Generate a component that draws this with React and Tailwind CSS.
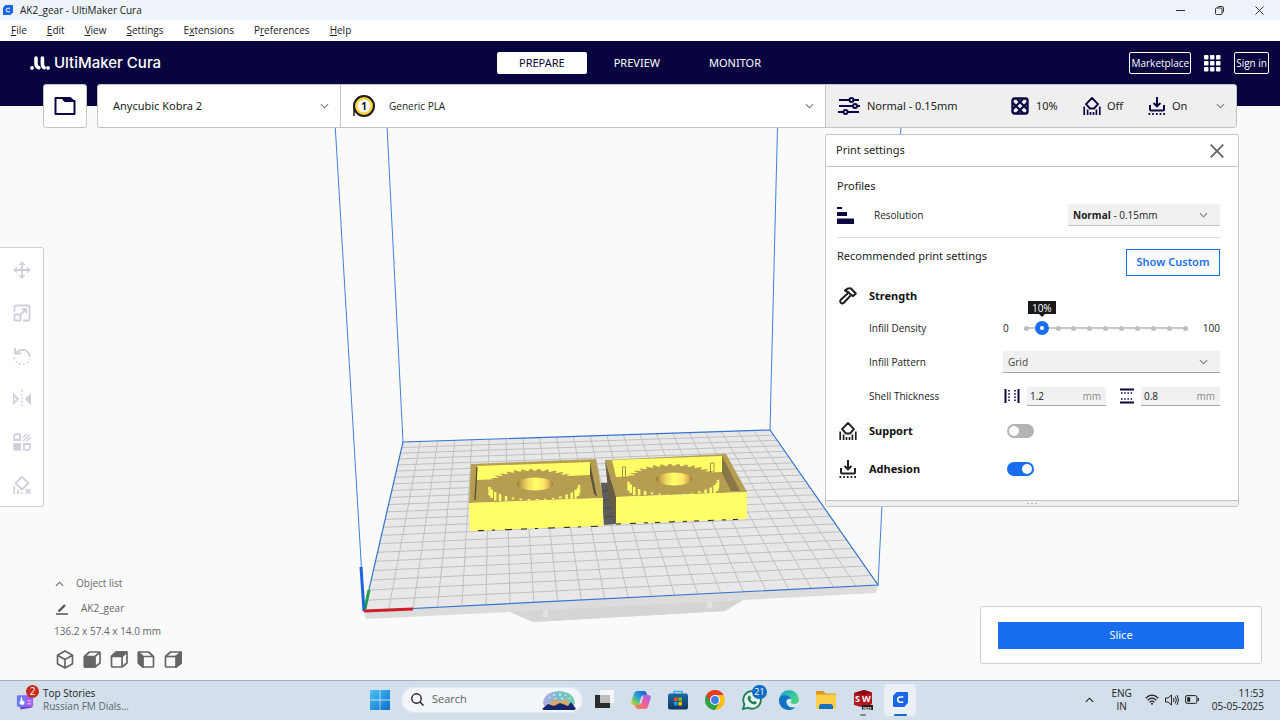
import * as React from 'react';

const NAVY = '#0b0742';

/* ---------- icons ---------- */

function Chevron({ className = '', up = false }) {
    return (
        <svg viewBox="0 0 10 6" className={`w-[9px] h-[6px] shrink-0 ${className}`} fill="none" stroke="currentColor" strokeWidth="1.2">
            <path d={up ? 'M1 5l4-4 4 4' : 'M1 1l4 4 4-4'} />
        </svg>
    );
}

function CuraMark({ className }) {
    return (
        <svg viewBox="0 0 16 16" className={className}>
            <path d="M4 0h11q1 0 1 1v10.500L12 16H1q-1 0-1-1V4z" fill="#1b66e8" />
            <path d="M11 5.200H7.800a2.800 2.800 0 0 0 0 5.600H11" fill="none" stroke="#fff" strokeWidth="1.600" />
        </svg>
    );
}

function UltiMakerLogo() {
    return (
        <svg viewBox="0 0 20 14" className="w-5 h-[14px]" fill="none" stroke="#fff" strokeWidth="3.600" strokeLinecap="round">
            <path d="M2 11.900h.01M18 11.900h.01" strokeWidth="3.800" />
            <path d="M6 2v5.500q0 3.400 2.800 4.200M12.400 2v5.500q0 3.200 1.800 4.200" />
        </svg>
    );
}

function FolderIcon() {
    return (
        <svg viewBox="0 0 22 20" className="w-[22px] h-5" fill="none" stroke={NAVY} strokeWidth="2" strokeLinejoin="round">
            <path d="M1.500 2h7l2.500 3h9.500v13h-19z" />
            <path d="M8 1h8.500L21 5H11z" fill={NAVY} stroke="none" />
        </svg>
    );
}

function SpoolIcon() {
    return (
        <svg viewBox="0 0 24 24" className="w-6 h-6">
            <path d="M2 12v10" stroke="#1c1c1c" strokeWidth="1.500" />
            <circle cx="12" cy="12" r="10" fill="#f9cf3c" stroke="#1c1c1c" strokeWidth="2" />
            <circle cx="12" cy="12" r="6.500" fill="#fff" />
            <text x="12" y="15.500" textAnchor="middle" fontSize="10" fontWeight="700" fill="#111">1</text>
        </svg>
    );
}

function SlidersIcon() {
    return (
        <svg viewBox="0 0 22 18" className="w-[22px] h-[18px]" fill="none" stroke={NAVY} strokeWidth="2">
            <path d="M1 3h10M16 3h5M1 9h13M20 9h2M0 15h5M10 15h11" />
            <circle cx="13.500" cy="3" r="2" />
            <circle cx="17" cy="9" r="2" />
            <circle cx="7.500" cy="15" r="2" />
        </svg>
    );
}

function InfillIcon() {
    return (
        <svg viewBox="0 0 18 18" className="w-[18px] h-[18px]">
            <rect x="1.500" y="1.500" width="15" height="15" rx="2" fill="#efefef" stroke={NAVY} strokeWidth="2.400" />
            <path d="M2 12L12 2M6 16L16 6M2 6l10 10M6 2l10 10" stroke={NAVY} strokeWidth="2.200" />
        </svg>
    );
}

function SupportIcon() {
    return (
        <svg viewBox="0 0 18 18" className="w-[18px] h-[18px]" fill="none" stroke="currentColor" strokeWidth="1.900">
            <path d="M9 1l6 6.200-4 4.300H7L3 7.200z" strokeLinejoin="round" />
            <path d="M1.200 9.500V18M4.600 12.500V18M7.500 15V18M10.500 15V18M13.400 12.500V18M16.800 9.500V18" strokeWidth="1.700" />
        </svg>
    );
}

function AdhesionIcon() {
    return (
        <svg viewBox="0 0 18 18" className="w-[18px] h-[18px]" fill="none" stroke="currentColor" strokeWidth="2">
            <path d="M9 0v9M5.500 6L9 9.300 12.500 6" />
            <path d="M2 8v4.500q0 1 1 1h12q1 0 1-1V8" />
            <path d="M0.500 17h17" strokeDasharray="1.700 2" strokeWidth="1.900" />
        </svg>
    );
}

function HammerIcon() {
    return (
        <svg viewBox="0 0 18 18" className="w-[18px] h-[18px]" fill="none" stroke="#222" strokeWidth="2" strokeLinejoin="round">
            <path d="M6 3.500Q9 .8 12 1.500l4.800 5-2.600 2.500-2-1-2.500-2.500z" />
            <path d="M9.200 6L1.800 12.800a2 2 0 0 0 3 3L11.600 8.500" />
        </svg>
    );
}

function WallIcon() {
    return (
        <svg viewBox="0 0 16 14" className="w-4 h-[14px]" stroke={NAVY} fill="none">
            <path d="M1.500 0v14M14.500 0v14" strokeWidth="2" />
            <path d="M5 1v12M11 1v12" strokeWidth="1.600" strokeDasharray="1.500 1.700" />
        </svg>
    );
}

function TopBottomIcon() {
    return (
        <svg viewBox="0 0 14 16" className="w-[14px] h-4" stroke={NAVY} fill="none">
            <path d="M0 1.500h14M0 14.500h14" strokeWidth="2" />
            <path d="M1 5h12M1 11h12" strokeWidth="1.600" strokeDasharray="1.500 1.700" />
        </svg>
    );
}

const toolIcons = [
    ['Move', (
        <g key="m">
            <path d="M9 2v14M2 9h14" />
            <path d="M9 0l3.600 4H5.400zM9 18l3.600-4H5.400zM0 9l4-3.600v7.200zM18 9l-4-3.600v7.200z" fill="currentColor" stroke="none" />
        </g>
    )],
    ['Scale', (
        <g key="s">
            <path d="M1.500 8V2.500q0-1 1-1h13q1 0 1 1v13q0 1-1 1H10M1.500 10.500h6v6h-5q-1 0-1-1zM7.500 10.500L13 5M8.500 4.800h4.800v4.800" />
        </g>
    )],
    ['Rotate', (
        <g key="r">
            <path d="M2 1v5.500h6M2.500 6Q7 1.500 12 3.200 16.500 5 16.800 10" />
            <path d="M1 10.500Q3 17 9 17.200 14.500 17 16.500 12" strokeDasharray="1.600 2.400" />
        </g>
    )],
    ['Mirror', (
        <g key="i">
            <path d="M9 0v18" strokeDasharray="1.800 1.800" strokeWidth="1.600" />
            <path d="M.5 4.500L5 9 .5 13.500z" />
            <path d="M18 4v10l-5-5z" fill="currentColor" />
        </g>
    )],
    ['Per model settings', (
        <g key="p">
            <path d="M1.200 2.500q0-1.300 1.300-1.300H7V7H1.200zM11 11h5.800v4.500q0 1.300-1.300 1.300H11z" />
            <path d="M1.200 11H7v5.800H2.500q-1.300 0-1.300-1.300z" fill="currentColor" />
            <path d="M10 4.500L14 .8M10 8l7-6.500M13 8.500l4.500-4" strokeWidth="1.500" />
        </g>
    )],
    ['Support blocker', (
        <g key="b">
            <path d="M9 .8l6.500 6.400L9 13.500 2.500 7.200z" />
            <path d="M1.200 10v8M5 14v4M8.500 16v2" />
            <path d="M13 13l4.500 4.500M17.500 13L13 17.500" />
        </g>
    )],
];

const CUBE_LINES = 'M1.500 6.500V16q0 1 1 1H12l5-4V3q0-1-1-1H6.500z';

const cubeIcons = [
    ['3D view', <path key="a" d="M9 1l7.500 4.200v8.600L9 18l-7.500-4.200V5.200zM1.500 5.200L9 9.500l7.500-4.300M9 9.500V18" />],
    ['Front view', <g key="b"><path d={CUBE_LINES} /><path d="M1.500 6.500H12V17H1.500z" fill="currentColor" /><path d="M12 6.500l5-4.500" /></g>],
    ['Top view', <g key="c"><path d={CUBE_LINES} /><path d="M1.500 6.500L6.500 2H17l-5 4.500z" fill="currentColor" /><path d="M12 6.500V17" /></g>],
    ['Left view', <g key="d"><path d="M16.500 6.500V16q0 1-1 1H6L1.500 13V3q0-1 1-1h9zM6 6.500h10.500" /><path d="M1.500 2L6 6.500V17l-4.500-4z" fill="currentColor" /></g>],
    ['Right view', <g key="e"><path d={CUBE_LINES} /><path d="M12 6.500L17 2v11l-5 4z" fill="currentColor" /><path d="M1.500 6.500H12" /></g>],
];

/* ---------- 3D scene ---------- */

const PLATE = [[364, 611], [878, 585], [770, 430], [403, 442]];

// maps the unit square onto the build plate
function project(u, v) {
    const [[x0, y0], [x1, y1], [x2, y2], [x3, y3]] = PLATE;
    const dx1 = x1 - x2, dx2 = x3 - x2, sx = x0 - x1 + x2 - x3;
    const dy1 = y1 - y2, dy2 = y3 - y2, sy = y0 - y1 + y2 - y3;
    const det = dx1 * dy2 - dx2 * dy1;
    const g = (sx * dy2 - dx2 * sy) / det;
    const h = (dx1 * sy - sx * dy1) / det;
    const w = g * u + h * v + 1;
    const x = ((x1 - x0 + g * x1) * u + (x3 - x0 + h * x3) * v + x0) / w;
    const y = ((y1 - y0 + g * y1) * u + (y3 - y0 + h * y3) * v + y0) / w;
    return `${x.toFixed(2)} ${y.toFixed(2)}`;
}

const CELLS = 22;
let gridPath = '';
for (let i = 1; i < CELLS; i++) {
    const t = i / CELLS;
    gridPath += `M${project(t, 0)}L${project(t, 1)}M${project(0, t)}L${project(1, t)}`;
}

const TEETH = 34;

function gearPath(cx, cy, rx, ry) {
    let d = '';
    for (let i = 0; i < TEETH * 4; i++) {
        const a = (i / (TEETH * 4)) * Math.PI * 2;
        const k = i % 4 < 2 ? 1 : 0.88;
        d += `${i ? 'L' : 'M'}${(cx + Math.cos(a) * rx * k).toFixed(2)} ${(cy + Math.sin(a) * ry * k).toFixed(2)}`;
    }
    return d + 'z';
}

// lit vertical faces under the teeth at both sides, the front ones are hidden by the wall
function toothSides(cx, cy, rx, ry) {
    let d = '';
    for (let i = 0; i < TEETH / 2; i++) {
        const a = ((i + 0.12) / TEETH) * Math.PI * 2;
        const c = Math.cos(a);
        const len = Math.abs(c) > 0.62 ? 9 : 2;
        d += `M${(cx + c * (rx - 1)).toFixed(2)} ${(cy + Math.sin(a) * ry).toFixed(2)}v${len}`;
    }
    return d;
}

function Gear({ cx, cy }) {
    return (
        <g>
            <path d={toothSides(cx, cy, 46, 15)} stroke="#ffff66" strokeWidth="2.500" />
            <path d={gearPath(cx, cy, 46, 15)} fill="#b59d52" />
            <ellipse cx={cx + 1} cy={cy} rx="18" ry="6.500" fill="url(#bore)" />
        </g>
    );
}

function Scene() {
    return (
        <svg viewBox="0 106 1280 574" preserveAspectRatio="xMidYMid slice" className="absolute inset-0 w-full h-full" role="img" aria-label="Build plate with two gear boxes">
            <defs>
                <linearGradient id="bore">
                    <stop offset="0" stopColor="#8f7638" />
                    <stop offset=".12" stopColor="#c9a84c" />
                    <stop offset=".3" stopColor="#f2dc60" />
                    <stop offset=".5" stopColor="#ffff66" />
                    <stop offset=".75" stopColor="#ffe568" />
                    <stop offset=".9" stopColor="#d8b04e" />
                    <stop offset="1" stopColor="#8f7638" />
                </linearGradient>
                <clipPath id="leftBox"><path d="M477 464H591L598 498 475 502z" /></clipPath>
                <clipPath id="rightBox"><path d="M612 458H723L741 492 619 496z" /></clipPath>
            </defs>

            <path d="M364 611L878 585 876 593 743 600 725 611 533 622 510 612 366 619z" fill="#dcdcdc" />
            <path d="M510 612L743 600 725 611 533 622z" fill="#d5d5d5" />
            <path d="M543 610h5v7h-5zM707 602h5v6h-5z" fill="#e2e2e2" />

            <path d="M364 611L878 585 770 430 403 442z" fill="#e8e8e8" />
            <path d={gridPath} stroke="#c0c0c0" strokeWidth="1" fill="none" />
            <path d="M364 611L878 585 770 430 403 442z" fill="none" stroke="#3672cf" strokeWidth="1.200" />
            <path d="M364 611L334 106M403 442L386 106M770 430L778 106M878 585L902 106" fill="none" stroke="#3f7fdc" strokeWidth="1" />

            {/* left box */}
            <path d="M601 483h8l7 41-12 1z" fill="#5c5c5c" />
            <path d="M603 491l12-1M604 500l12-1M604 508l12-1M604 517l12-1" stroke="#4a4a4a" />
            <path d="M471 464L596 459 603 498 469 503z" fill="#b59d52" />
            <path d="M477 466L590 462V475L477 480z" fill="#ffff66" />
            <g clipPath="url(#leftBox)"><Gear cx={534} cy={484} /></g>
            <path d="M590 462L597 497 594 494 590 475z" fill="#5f563f" />
            <path d="M477 467L475 500" stroke="#4f4630" strokeWidth="1.200" />
            <path d="M469 503L603 498V526L470 531z" fill="#ffff66" />
            <path d="M470 531L603 526" stroke="#22221a" strokeWidth="1" strokeDasharray="6 8 3 10 7 9" strokeDashoffset="-8" />

            {/* right box */}
            <path d="M605 460L726 454 747 492 616 497z" fill="#b59d52" />
            <path d="M605 460L616 497V524L609 500z" fill="#665c42" />
            <path d="M612 460L722 456V472L616 477z" fill="#ffff66" />
            <g clipPath="url(#rightBox)"><Gear cx={673} cy={479} /></g>
            <path d="M722 456L740 491 731 491 722 473z" fill="#877747" />
            <path d="M622.500 478v-11h3v11M710.500 474v-11h3.500v11" fill="none" stroke="#a58e4c" strokeWidth="1" />
            <path d="M616 497L747 492V519L616 524z" fill="#ffff66" />
            <path d="M616 524L747 519" stroke="#22221a" strokeWidth="1" strokeDasharray="5 9 6 8 4 7" />

            <path d="M365 609L369 590" stroke="#1f9d49" strokeWidth="3" />
            <path d="M364 611L361 567" stroke="#1c66d8" strokeWidth="3" />
            <path d="M364 611L413 609" stroke="#cb2026" strokeWidth="3" />
        </svg>
    );
}

/* ---------- window chrome ---------- */

function TitleBar() {
    return (
        <div className="h-5 flex items-center bg-[#eef3f9] pl-[3px] text-[10px] text-[#1c1c1c]">
            <CuraMark className="w-[10px] h-[10px] mr-[7px]" />
            <span className="flex-1">AK2_gear - UltiMaker Cura</span>
            <button aria-label="Minimize" className="w-[39px] h-5 flex items-center justify-center">
                <svg viewBox="0 0 9 9" className="w-[9px] h-[9px]" stroke="#333"><path d="M0 4.500h9" /></svg>
            </button>
            <button aria-label="Restore" className="w-[39px] h-5 flex items-center justify-center">
                <svg viewBox="0 0 9 9" className="w-[9px] h-[9px]" fill="none" stroke="#333">
                    <rect x=".5" y="2" width="6.500" height="6.500" rx="1" />
                    <path d="M2.500 2V1.500q0-1 1-1H7q1.500 0 1.500 1.500v3.500q0 1-1 1" />
                </svg>
            </button>
            <button aria-label="Close" className="w-[41px] h-5 flex items-center justify-center">
                <svg viewBox="0 0 9 9" className="w-[9px] h-[9px]" stroke="#333"><path d="M.5.5l8 8M8.500.5l-8 8" /></svg>
            </button>
        </div>
    );
}

const menus = [
    ['', 'F', 'ile'],
    ['', 'E', 'dit'],
    ['', 'V', 'iew'],
    ['', 'S', 'ettings'],
    ['E', 'x', 'tensions'],
    ['P', 'r', 'eferences'],
    ['', 'H', 'elp'],
];

function MenuBar() {
    return (
        <nav className="h-[21px] flex items-center gap-5 bg-white pl-[11px] text-[10px] text-[#222]">
            {menus.map(([before, key, after]) => (
                <button key={after}>{before}<u>{key}</u>{after}</button>
            ))}
        </nav>
    );
}

function Header() {
    return (
        <header className="h-[65px] bg-[#08043f] pt-[11px] px-[11px] grid grid-cols-[1fr_auto_1fr] items-start text-white">
            <div className="h-[22px] ml-[19px] flex items-center gap-1">
                <UltiMakerLogo />
                <span className="font-['Inter'] text-[15px] font-medium leading-[22px]">UltiMaker Cura</span>
            </div>
            <div className="flex gap-[5px] font-['Noto_Sans'] text-[11px]">
                <button className="h-[22px] px-[22px] rounded-[2px] bg-white text-[#08043f]">PREPARE</button>
                <button className="h-[22px] px-[22px]">PREVIEW</button>
                <button className="h-[22px] px-[22px]">MONITOR</button>
            </div>
            <div className="flex justify-end items-center gap-[13px] text-[10px]">
                <button className="h-[22px] px-[1px] border border-white rounded-[2px]">Marketplace</button>
                <button aria-label="Apps">
                    <svg viewBox="0 0 17 17" className="w-[17px] h-[17px]" fill="#fff">
                        {[0, 6, 12].map((y) => [0, 6, 12].map((x) => (
                            <rect key={`${x}-${y}`} x={x} y={y} width="4.500" height="4.500" rx="1" />
                        )))}
                    </svg>
                </button>
                <button className="h-[22px] px-[1px] border border-white rounded-[2px]">Sign in</button>
            </div>
        </header>
    );
}

function StageBar() {
    return (
        <div className="relative -mt-[22px] flex gap-[10px] pl-[43px] pr-[43px]">
            <button aria-label="Open file" className="w-11 h-11 rounded-[3px] bg-white border border-[#c4c4c8] flex items-center justify-center">
                <FolderIcon />
            </button>
            <div className="flex-1 h-11 flex bg-white border border-[#c4c4c8] rounded-[3px] overflow-hidden">
                <button className="w-[243px] flex items-center justify-between pl-[15px] pr-[11px] border-r border-[#c4c4c8] font-['Noto_Sans'] text-[11px] text-[#222]">
                    Anycubic Kobra 2
                    <Chevron className="text-[#777]" />
                </button>
                <button className="flex-1 flex items-center pl-[11px] pr-[11px] text-[10px] text-[#222]">
                    <SpoolIcon />
                    <span className="flex-1 text-left pl-[13px]">Generic PLA</span>
                    <Chevron className="text-[#777]" />
                </button>
                <button className="w-[411px] flex items-center pl-3 pr-[11px] bg-[#efefef] border-l border-[#c4c4c8] font-['Noto_Sans'] text-[11px] text-[#222]">
                    <SlidersIcon />
                    <span className="flex-1 text-left pl-[7px]">Normal - 0.15mm</span>
                    <span className="w-[72px] flex items-center gap-[7px]"><InfillIcon />10%</span>
                    <span className="w-[65px] flex items-center gap-[6px] text-[#0b0742]"><SupportIcon /><span className="text-[#222]">Off</span></span>
                    <span className="w-[68px] flex items-center gap-[6px] text-[#0b0742]"><AdhesionIcon /><span className="text-[#222]">On</span></span>
                    <Chevron className="text-[#777]" />
                </button>
            </div>
        </div>
    );
}

function ToolPanel() {
    return (
        <div className="w-11 mt-[119px] bg-white border border-l-0 border-[#cfcfd4] rounded-r-[3px] flex flex-col">
            {toolIcons.map(([name, icon]) => (
                <button key={name} aria-label={name} className="h-[43px] flex items-center justify-center text-[#d0cfdb]">
                    <svg viewBox="0 0 18 18" className="w-[18px] h-[18px]" fill="none" stroke="currentColor" strokeWidth="1.800">{icon}</svg>
                </button>
            ))}
        </div>
    );
}

/* ---------- print settings ---------- */

function InfillSlider() {
    return (
        <div className="flex-1 flex items-center justify-between">
            <span className="text-[10px]">0</span>
            <div className="relative w-[174px] h-4 grid items-center">
                <div className="[grid-area:1/1] mx-[7px] h-[2px] bg-[#c8c8c8]" />
                <div className="[grid-area:1/1] mx-[5px] flex justify-between">
                    {Array.from({ length: 11 }, (_, i) => (
                        <span key={i} className="w-[5px] h-[5px] rounded-full bg-[#bebebe]" />
                    ))}
                </div>
                <input
                    type="range"
                    id="density"
                    min="0"
                    max="100"
                    defaultValue="10"
                    className="[grid-area:1/1] relative w-full h-4 m-0 appearance-none bg-transparent [&::-webkit-slider-thumb]:appearance-none [&::-webkit-slider-thumb]:w-[14px] [&::-webkit-slider-thumb]:h-[14px] [&::-webkit-slider-thumb]:rounded-full [&::-webkit-slider-thumb]:bg-white [&::-webkit-slider-thumb]:border-[5px] [&::-webkit-slider-thumb]:border-[#196ef0]"
                />
                <output htmlFor="density" className="absolute left-[9px] -top-[19px] w-7 h-[13px] bg-[#1a1a1a] text-white text-[10px] leading-[14px] text-center after:absolute after:left-[11px] after:top-[13px] after:border-x-[3px] after:border-t-[3px] after:border-x-transparent after:border-t-[#1a1a1a]">10%</output>
            </div>
            <span className="text-[10px]">100</span>
        </div>
    );
}

function ThicknessField({ id, label, value }) {
    return (
        <label className="w-[79px] h-[19px] flex items-center bg-[#f1f1f1] border-b border-[#a8a8a8] pt-[1px] pl-[3px] pr-[5px] text-[10px] text-[#8a8a8a]">
            <input id={id} aria-label={label} defaultValue={value} className="flex-1 min-w-0 bg-transparent text-[#222] outline-none" />
            mm
        </label>
    );
}

function Toggle({ id, checked }) {
    return (
        <input
            type="checkbox"
            role="switch"
            id={id}
            defaultChecked={checked}
            className="appearance-none ml-1 w-[27px] h-[14px] rounded-full bg-[#b4b4b4] checked:bg-[#196ef0] flex items-center px-[2px] checked:justify-end before:w-[10px] before:h-[10px] before:rounded-full before:bg-white"
        />
    );
}

function SettingRow({ className, icon, label, htmlFor, bold, children }) {
    return (
        <div className={`flex items-center ${className}`}>
            <span className="w-8 pl-[2px] text-[#222]">{icon}</span>
            <label htmlFor={htmlFor} className={bold ? "w-[134px] font-['Noto_Sans'] text-[11px] font-bold text-[#111]" : 'w-[134px] text-[10px]'}>{label}</label>
            {children}
        </div>
    );
}

function PrintSettings() {
    return (
        <section className="w-[414px] mt-[6px] mr-[41px] bg-white border border-[#c4c4c8] rounded-[3px] text-[#222] overflow-hidden">
            <div className="h-8 flex items-center justify-between pl-[10px] pr-[14px] border-b border-[#c4c4c8]">
                <h2 className="font-['Noto_Sans'] text-[11px]">Print settings</h2>
                <button aria-label="Close print settings">
                    <svg viewBox="0 0 14 14" className="w-[14px] h-[14px]" stroke="#666" strokeWidth="1.900"><path d="M.7.7l12.600 12.600M13.300.7L.7 13.300" /></svg>
                </button>
            </div>

            <div className="pt-[7px] pb-4 pl-[11px] pr-[18px]">
                <h3 className="h-6 flex items-center font-['Noto_Sans'] text-[11px]">Profiles</h3>
                <div className="h-[34px] flex items-center">
                    <svg viewBox="0 0 17 17" className="w-[17px] h-[17px] mr-5" fill={NAVY}><path d="M0 0h5v2H0zM0 5h10v4H0zM0 11.500h17V17H0z" /></svg>
                    <label htmlFor="resolution" className="flex-1 text-[10px]">Resolution</label>
                    <div className="relative w-[152px] h-[22px] flex items-center justify-between bg-[#f1f1f1] border-b border-[#c4c4c4] pl-[5px] pr-3 text-[10px]">
                        <span className="pt-[1px]"><b>Normal</b> - 0.15mm</span>
                        <Chevron className="text-[#777]" />
                        <select id="resolution" className="absolute inset-0 w-full opacity-0">
                            <option>Normal - 0.15mm</option>
                        </select>
                    </div>
                </div>
                <hr className="mt-[5px] border-[#dcdcdc]" />

                <div className="h-[38px] pt-[11px] flex items-start justify-between">
                    <h3 className="font-['Noto_Sans'] text-[11px] leading-[13px]">Recommended print settings</h3>
                    <button className="w-[94px] h-[27px] border border-[#196ef0] font-['Noto_Sans'] text-[11px] font-semibold text-[#196ef0]">Show Custom</button>
                </div>

                <SettingRow className="h-10" icon={<HammerIcon />} label="Strength" bold />
                <SettingRow className="h-6" label="Infill Density" htmlFor="density">
                    <InfillSlider />
                </SettingRow>
                <SettingRow className="h-11" label="Infill Pattern" htmlFor="pattern">
                    <div className="flex-1 h-[22px] grid items-center bg-[#f1f1f1] border-b border-[#a8a8a8]">
                        <select id="pattern" className="[grid-area:1/1] w-full appearance-none bg-transparent pt-[1px] pl-[5px] text-[10px] text-[#444]">
                            <option>Grid</option>
                        </select>
                        <Chevron className="[grid-area:1/1] justify-self-end mr-3 text-[#777] pointer-events-none" />
                    </div>
                </SettingRow>
                <SettingRow className="h-6" label="Shell Thickness" htmlFor="wall">
                    <div className="flex-1 flex items-center justify-between pl-[1px]">
                        <div className="flex items-center gap-[7px]">
                            <WallIcon />
                            <ThicknessField id="wall" label="Wall thickness" value="1.2" />
                        </div>
                        <div className="flex items-center gap-[7px]">
                            <TopBottomIcon />
                            <ThicknessField id="topbottom" label="Top/bottom thickness" value="0.8" />
                        </div>
                    </div>
                </SettingRow>
                <SettingRow className="h-[46px]" icon={<SupportIcon />} label="Support" htmlFor="support" bold>
                    <Toggle id="support" />
                </SettingRow>
                <SettingRow className="h-[30px]" icon={<AdhesionIcon />} label="Adhesion" htmlFor="adhesion" bold>
                    <Toggle id="adhesion" checked />
                </SettingRow>
            </div>

            <div className="h-[6px] flex items-center justify-center gap-[2px] bg-[#efefef] border-t border-[#c4c4c8]">
                <span className="w-[2px] h-[1px] bg-[#bbb]" />
                <span className="w-[2px] h-[1px] bg-[#bbb]" />
                <span className="w-[2px] h-[1px] bg-[#bbb]" />
            </div>
        </section>
    );
}

/* ---------- bottom of the stage ---------- */

function ObjectList() {
    return (
        <div className="pl-[54px] pb-[2px] text-[10px] text-[#666]">
            <button className="h-[25px] flex items-center">
                <Chevron up className="ml-[1px] mr-3" />
                Object list
            </button>
            <div className="h-[25px] flex items-center">
                <svg viewBox="0 0 12 12" className="w-3 h-3 ml-[2px] mr-[13px]" stroke="#555" fill="none">
                    <path d="M2.500 8.500L9 2" strokeWidth="2.400" />
                    <path d="M0 11h12" strokeWidth="1.500" />
                </svg>
                AK2_gear
            </div>
            <div className="h-5 flex items-center">136.2 x 57.4 x 14.0 mm</div>
            <div className="h-[37px] pl-[2px] flex items-center gap-[9px]">
                {cubeIcons.map(([name, icon]) => (
                    <button key={name} aria-label={name}>
                        <svg viewBox="0 0 18 19" className="w-[18px] h-[19px]" fill="none" stroke="currentColor" strokeWidth="1.700" strokeLinejoin="round">{icon}</svg>
                    </button>
                ))}
            </div>
        </div>
    );
}

function SliceCard() {
    return (
        <div className="w-[282px] mr-[18px] mb-4 px-[17px] pt-[15px] pb-[14px] bg-white border border-[#cfcfd4] rounded-[3px]">
            <button className="block w-full h-[27px] bg-[#196ef0] text-white font-['Noto_Sans'] text-[11px]">Slice</button>
        </div>
    );
}

/* ---------- taskbar ---------- */

const taskApps = [
    ['Task view', (
        <g key="t">
            <rect x="6" y="0" width="14" height="13" rx="1" fill="#f7f7f7" />
            <path d="M1 5h5v8h10v5H1z" fill="#2b2b2b" />
            <rect x="6" y="5" width="10" height="8" fill="#bdbdbd" />
        </g>
    )],
    ['Copilot', (
        <g key="c">
            <path d="M6 1h7q2 0 2.600 2l.6 2h-3q-2 0-2.700 2l-2 7Q8 16 6 15H3Q-.5 15 .5 11L3 3.500Q3.800 1 6 1z" fill="url(#copA)" />
            <path d="M14 19H7q-2 0-2.600-2l-.6-2h3q2 0 2.700-2l2-7Q12 4.500 14 5h3q3.500 0 2.500 4L17 16.500Q16.200 19 14 19z" fill="url(#copB)" />
            <path d="M10.300 6.500h2l-1.800 7h-2z" fill="#d3dfeb" />
        </g>
    )],
    ['Microsoft Store', (
        <g key="s">
            <path d="M6 4V1.500h8V4" fill="none" stroke="#35b4e8" strokeWidth="1.500" />
            <rect x="0" y="3.500" width="20" height="16" rx="2" fill="url(#store)" />
            <path d="M6 7.500h3.600v3.600H6z" fill="#f25022" />
            <path d="M10.400 7.500H14v3.600h-3.600z" fill="#7fba00" />
            <path d="M6 11.900h3.600v3.600H6z" fill="#00a4ef" />
            <path d="M10.400 11.900H14v3.600h-3.600z" fill="#ffb900" />
        </g>
    )],
    ['Chrome', (
        <g key="h">
            <circle cx="10" cy="10" r="10" fill="#fbc116" />
            <path d="M10 10L1.340 5A10 10 0 0 0 10 20l4.300-7.500z" fill="#2ba24c" />
            <path d="M10 5h8.660A10 10 0 0 0 1.340 5L5.700 12.500z" fill="#e33b2e" />
            <circle cx="10" cy="10" r="5" fill="#fff" />
            <circle cx="10" cy="10" r="3.900" fill="#3d7df0" />
        </g>
    )],
    ['WhatsApp', (
        <g key="w">
            <path d="M1 19l1.400-4.800A8.800 8.800 0 1 1 6 17.700z" fill="#e9f2ee" stroke="#1f8055" strokeWidth="1.900" />
            <path d="M6.500 6q1-1 1.800.2l.8 1.800-.9 1.200q1 1.900 3 2.700l1.200-1 2 1q.8.700-.2 1.800-1.600 1.500-4.500 0-3-1.700-4-4.500Q5.300 7.300 6.500 6z" fill="#1f8055" />
        </g>
    )],
    ['Edge', (
        <g key="e">
            <circle cx="10" cy="10" r="10" fill="url(#edge)" />
            <path d="M.2 9Q1 5 6 5.200q6 .5 6.300 5.300Q12 8.500 9.500 9 6.500 10 8 14q2.500 5 9 2.500Q14 20.500 9 20-.8 18.500.2 9z" fill="#1472c4" />
            <path d="M12.300 9.500q.3 1.800-1 2.800.5 1.700 4 1.600 4-.3 4.700-3.500l.5 4-3 2.500q-7 2-9.500-3Q6.300 9.500 9.600 9q2-.5 2.700.5z" fill="#d8e8f4" />
        </g>
    )],
    ['File Explorer', (
        <g key="f">
            <path d="M0 2q0-1 1-1h6.500l2 2.500H19q1 0 1 1V9H0z" fill="#d99a1c" />
            <rect x="0" y="4.500" width="20" height="14.500" rx="1.300" fill="#fccf4a" />
            <path d="M3 19v-2.500q0-2.500 2.500-2.500h9q2.500 0 2.500 2.500V19z" fill="#1571bd" />
        </g>
    )],
    ['SolidWorks', (
        <g key="k">
            <path d="M1 3l10-3 8 2.500V14l-7 4-11-3z" fill="#b5151d" />
            <path d="M1 3l10-3 8 2.500L11 5z" fill="#8a0d14" />
            <text x="2" y="12" fontSize="9" fontWeight="700" fill="#fff">S</text>
            <text x="9" y="12" fontSize="9" fontWeight="700" fill="#fff">W</text>
            <rect x="9" y="15" width="11" height="5" fill="#1c1c1c" />
            <text x="9.500" y="19.500" fontSize="4" fontWeight="700" fill="#fff">2021</text>
        </g>
    )],
];

function Taskbar() {
    return (
        <footer className="h-10 pb-[2px] grid grid-cols-[1fr_auto_1fr] items-center bg-[#d3dfeb] border-t border-[#a6b1bb] text-[#1c1c1c]">
            <button className="pl-4 flex items-center text-left">
                <span className="relative mr-2">
                    <svg viewBox="0 0 20 20" className="w-[19px] h-5">
                        <path d="M2 10l15 2v6L5 20z" fill="#7a3fd0" />
                        <rect x="1" y="5" width="17" height="12" rx="1.500" fill="#a35df2" />
                        <path d="M1 6h9v11H2.500Q1 17 1 15.500z" fill="#6a7cf5" />
                        <path d="M5 7v4l-1.500 1Q4 15 6.500 15T9 12L6.500 10V7z" fill="#fff" />
                        <path d="M12 11h4M12 14h4" stroke="#e6d3ff" />
                    </svg>
                    <span className="absolute left-[10px] -top-[5px] w-[13px] h-[13px] rounded-full bg-[#c42b1c] text-white text-[10px] leading-[13px] text-center">2</span>
                </span>
                <span className="text-[10px] leading-[13px]">
                    Top Stories<br />
                    <span className="text-[#5d6670]">Russian FM Dials...</span>
                </span>
            </button>

            <div className="flex items-center gap-[5px]">
                <button aria-label="Start" className="w-8 h-8 flex items-center justify-center">
                    <svg viewBox="0 0 20 20" className="w-5 h-5">
                        <defs>
                            <linearGradient id="win" x2="1" y2="1"><stop stopColor="#4cc4f5" /><stop offset="1" stopColor="#0a6fd0" /></linearGradient>
                            <linearGradient id="copA" x1="1" x2="0" y2="1"><stop stopColor="#1d4fd0" /><stop offset=".5" stopColor="#22a6d8" /><stop offset=".8" stopColor="#8ccf4a" /><stop offset="1" stopColor="#f5c92e" /></linearGradient>
                            <linearGradient id="copB" x1="1" x2="0" y2="1"><stop stopColor="#a45cf0" /><stop offset=".5" stopColor="#ec5fa0" /><stop offset="1" stopColor="#fb8a3a" /></linearGradient>
                            <linearGradient id="store" x2="0" y2="1"><stop stopColor="#1b6aa8" /><stop offset="1" stopColor="#12345c" /></linearGradient>
                            <linearGradient id="edge" x2="1" y2="1"><stop stopColor="#1d9fe0" /><stop offset=".6" stopColor="#3fcf8e" /><stop offset="1" stopColor="#54d96c" /></linearGradient>
                        </defs>
                        <path d="M0 0h9.600v9.600H0zM10.400 0H20v9.600h-9.600zM0 10.400h9.600V20H0zM10.400 10.400H20V20h-9.600z" fill="url(#win)" />
                    </svg>
                </button>

                <label className="w-[182px] h-[26px] flex items-center rounded-full bg-[#f2f6fb] border border-[#e2e9f1] pl-[9px] pr-[5px] overflow-hidden">
                    <svg viewBox="0 0 13 13" className="w-[13px] h-[13px] mr-2 shrink-0" fill="none" stroke="#222" strokeWidth="1.400"><circle cx="5.500" cy="5.500" r="4.700" /><path d="M9 9l3.500 3.500" /></svg>
                    <input type="search" placeholder="Search" aria-label="Search" className="flex-1 min-w-0 bg-transparent text-[11px] text-[#222] placeholder:text-[#5c5c5c] outline-none" />
                    <svg viewBox="0 0 36 22" className="w-9 h-[22px] shrink-0">
                        <defs>
                            <linearGradient id="sky"><stop stopColor="#a99be0" /><stop offset=".5" stopColor="#5fb8c4" /><stop offset="1" stopColor="#62c9a0" /></linearGradient>
                        </defs>
                        <path d="M2 14Q3 3 18 2q15 1 16 12l-3 6H5z" fill="url(#sky)" opacity=".85" />
                        <path d="M8 15l7-5 4 3 5-3 6 6v4H6z" fill="#e0a763" />
                        <path d="M1 20l6-5 6 2 6-3 8 3 3-4 5 7-2 1H3z" fill="#14276b" />
                        <path d="M8 8l1 1M13 5v2M19 4v3M25 6l-1 1M29 9l-1 1M20 9l2 1M15 9l-1 1" stroke="#fff" />
                    </svg>
                </label>

                {taskApps.map(([name, icon]) => (
                    <button key={name} aria-label={name} className="relative w-8 h-8 flex items-center justify-center">
                        <svg viewBox="0 0 20 20" className="w-5 h-5">{icon}</svg>
                        {name === 'WhatsApp' && (
                            <span className="absolute left-4 top-[1px] w-[15px] h-[14px] rounded-full bg-[#0f6cc0] text-white text-[9px] leading-[14px] text-center">21</span>
                        )}
                        {name === 'SolidWorks' && (
                            <span className="absolute left-[13px] bottom-0 w-[6px] h-[2px] rounded-full bg-[#80868c]" />
                        )}
                    </button>
                ))}
                <button aria-label="UltiMaker Cura" className="relative w-8 h-8 rounded-[4px] bg-[#e9f0f8] flex items-center justify-center">
                    <CuraMark className="w-[15px] h-[15px]" />
                    <span className="absolute left-[10px] bottom-0 w-[13px] h-[2px] rounded-full bg-[#0f6cc0]" />
                </button>
            </div>

            <div className="flex items-center justify-end pr-4 text-[10px] leading-[13px]">
                <button aria-label="Show hidden icons" className="mr-[17px]"><Chevron up /></button>
                <button className="text-center mr-[13px]">ENG<br />IN</button>
                <button aria-label="Network, volume, battery" className="flex items-center gap-[6px] mr-[13px]">
                    <svg viewBox="0 0 14 11" className="w-[14px] h-[11px]" fill="none" stroke="#222" strokeWidth="1.200">
                        <path d="M.7 4.200Q7-2 13.300 4.200M2.700 6.200q4.300-4 8.600 0M4.700 8.200q2.300-2 4.600 0" />
                        <circle cx="7" cy="9.700" r="1" fill="#222" stroke="none" />
                    </svg>
                    <svg viewBox="0 0 14 12" className="w-[14px] h-3" fill="none" stroke="#222">
                        <path d="M.5 4h2.500L6.500 1v10L3 8H.5zM8.500 4q1 2 0 4M10.300 2.500q2.200 3.500 0 7M12 1q3 5 0 10" />
                    </svg>
                    <svg viewBox="0 0 14 9" className="w-[14px] h-[9px]" fill="none" stroke="#222">
                        <rect x=".6" y=".6" width="11.300" height="7.800" rx="1.500" />
                        <path d="M2.200 2.200h3v4.600h-3z" fill="#222" stroke="none" />
                        <path d="M13.300 3v3" strokeWidth="1.300" />
                    </svg>
                </button>
                <button className="text-right">11:53<br />05-05-2025</button>
            </div>
        </footer>
    );
}

function App() {
    return (
        <div className="min-h-screen flex flex-col font-['Open_Sans',sans-serif] bg-[#fafafa]">
            <TitleBar />
            <MenuBar />
            <Header />
            <main className="relative flex-1 flex flex-col">
                <Scene />
                <StageBar />
                <div className="relative flex items-start justify-between">
                    <ToolPanel />
                    <PrintSettings />
                </div>
                <div className="relative flex-1 flex items-end justify-between">
                    <ObjectList />
                    <SliceCard />
                </div>
            </main>
            <Taskbar />
        </div>
    );
}

export default App;
